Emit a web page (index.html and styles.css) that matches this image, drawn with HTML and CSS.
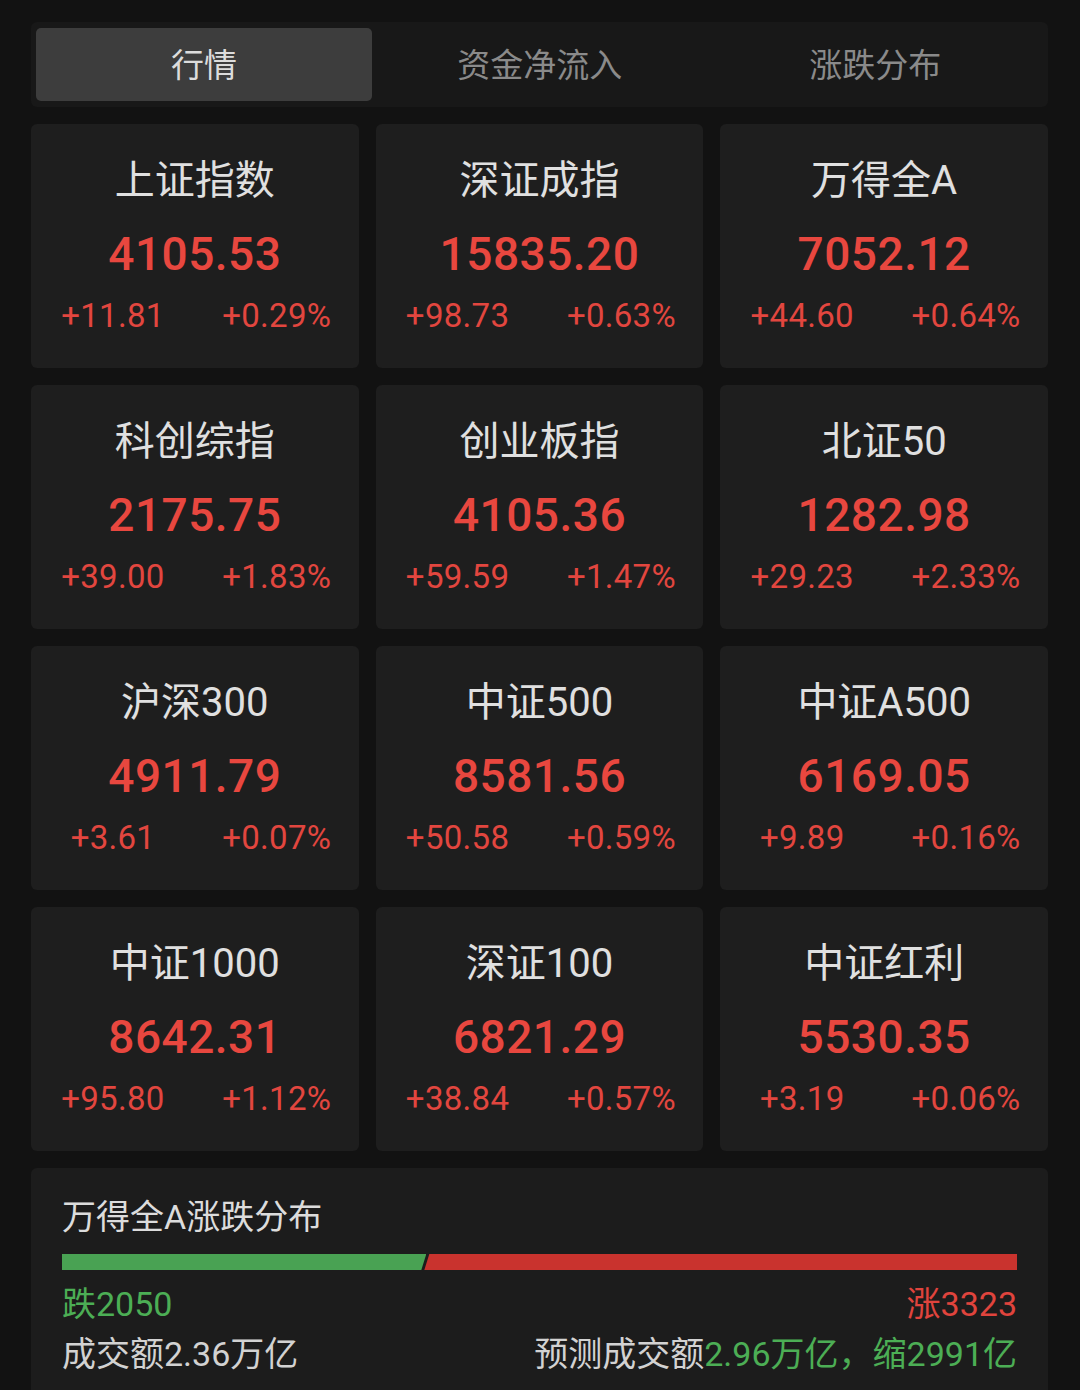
FILE: index.html
```html
<!DOCTYPE html>
<html lang="zh-CN">
<head>
<meta charset="utf-8">
<title>行情</title>
<link rel="stylesheet" href="styles.css">
</head>
<body>
<div class="page">
  <div class="tabs">
    <div class="tab active">行情</div>
    <div class="tab">资金净流入</div>
    <div class="tab">涨跌分布</div>
  </div>

  <div class="grid">
    <div class="card"><div class="name">上证指数</div><div class="value">4105.53</div><div class="chg"><span>+11.81</span><span>+0.29%</span></div></div>
    <div class="card"><div class="name">深证成指</div><div class="value">15835.20</div><div class="chg"><span>+98.73</span><span>+0.63%</span></div></div>
    <div class="card"><div class="name">万得全A</div><div class="value">7052.12</div><div class="chg"><span>+44.60</span><span>+0.64%</span></div></div>

    <div class="card"><div class="name">科创综指</div><div class="value">2175.75</div><div class="chg"><span>+39.00</span><span>+1.83%</span></div></div>
    <div class="card"><div class="name">创业板指</div><div class="value">4105.36</div><div class="chg"><span>+59.59</span><span>+1.47%</span></div></div>
    <div class="card"><div class="name">北证50</div><div class="value">1282.98</div><div class="chg"><span>+29.23</span><span>+2.33%</span></div></div>

    <div class="card"><div class="name">沪深300</div><div class="value">4911.79</div><div class="chg"><span>+3.61</span><span>+0.07%</span></div></div>
    <div class="card"><div class="name">中证500</div><div class="value">8581.56</div><div class="chg"><span>+50.58</span><span>+0.59%</span></div></div>
    <div class="card"><div class="name">中证A500</div><div class="value">6169.05</div><div class="chg"><span>+9.89</span><span>+0.16%</span></div></div>

    <div class="card"><div class="name">中证1000</div><div class="value">8642.31</div><div class="chg"><span>+95.80</span><span>+1.12%</span></div></div>
    <div class="card"><div class="name">深证100</div><div class="value">6821.29</div><div class="chg"><span>+38.84</span><span>+0.57%</span></div></div>
    <div class="card"><div class="name">中证红利</div><div class="value">5530.35</div><div class="chg"><span>+3.19</span><span>+0.06%</span></div></div>
  </div>

  <div class="panel">
    <div class="panel-title">万得全A涨跌分布</div>
    <div class="bar">
      <div class="bar-down" style="width: 38.15%"></div>
      <div class="bar-up"></div>
    </div>
    <div class="row first">
      <span class="green">跌2050</span>
      <span class="red">涨3323</span>
    </div>
    <div class="row">
      <span class="muted">成交额2.36万亿</span>
      <span class="muted">预测成交额<span class="green">2.96万亿，缩2991亿</span></span>
    </div>
  </div>
</div>
</body>
</html>
```

FILE: styles.css
```css
html, body {
  margin: 0;
  padding: 0;
  background: #121212;
}
body {
  font-family: Roboto, "Noto Sans CJK SC", "Noto Sans", sans-serif;
  width: 1080px;
  height: 1390px;
  overflow: hidden;
}
.page {
  padding: 22px 32px 0 31px;
  display: flex;
  flex-direction: column;
  gap: 17px;
}
.tabs {
  height: 85px;
  background: #181818;
  border-radius: 6px;
  padding: 6px 5px;
  box-sizing: border-box;
  display: grid;
  grid-template-columns: 336px 1fr 1fr;
}
.tab {
  display: flex;
  align-items: center;
  justify-content: center;
  font-size: 33px;
  padding-bottom: 3px;
  color: #8a8a8a;
  border-radius: 5px;
  font-family: "Noto Sans CJK SC", sans-serif;
}
.tab.active {
  background: #3d3d3d;
  color: #dcdcdc;
}
.grid {
  display: grid;
  grid-template-columns: repeat(3, 1fr);
  column-gap: 17px;
  row-gap: 17px;
}
.card {
  height: 244px;
  background: #1e1e1e;
  border-radius: 6px;
  box-sizing: border-box;
  padding-top: 33px;
  display: flex;
  flex-direction: column;
  align-items: stretch;
  text-align: center;
}
.name {
  font-size: 40px;
  line-height: 48px;
  color: #e0e0e0;
}
.value {
  margin-top: 21px;
  font-size: 46px;
  line-height: 56px;
  font-weight: 500;
  color: #e8473f;
  letter-spacing: 0.5px;
}
.chg {
  margin-top: 14px;
  display: grid;
  grid-template-columns: 1fr 1fr;
  font-size: 33px;
  line-height: 40px;
  color: #e2463f;
  letter-spacing: 0.3px;
}
.panel {
  background: #1c1c1c;
  border-radius: 6px;
  padding: 26px 31px 20px 31px;
  height: 260px;
  box-sizing: border-box;
}
.panel-title {
  font-size: 34px;
  line-height: 46px;
  color: #dcdcdc;
}
.bar {
  margin-top: 14px;
  height: 16px;
  display: flex;
}
.bar-down {
  background: #49a253;
  clip-path: polygon(0 0, 100% 0, calc(100% - 5px) 100%, 0 100%);
}
.bar-up {
  flex: 1;
  margin-left: -2px;
  background: #c9332e;
  clip-path: polygon(5px 0, 100% 0, 100% 100%, 0 100%);
}
.row {
  display: flex;
  justify-content: space-between;
  font-size: 34px;
  line-height: 50px;
}
.row.first {
  margin-top: 9px;
}
.green { color: #4cae55; }
.red { color: #e0443d; }
.muted { color: #d2d2d2; }
```
